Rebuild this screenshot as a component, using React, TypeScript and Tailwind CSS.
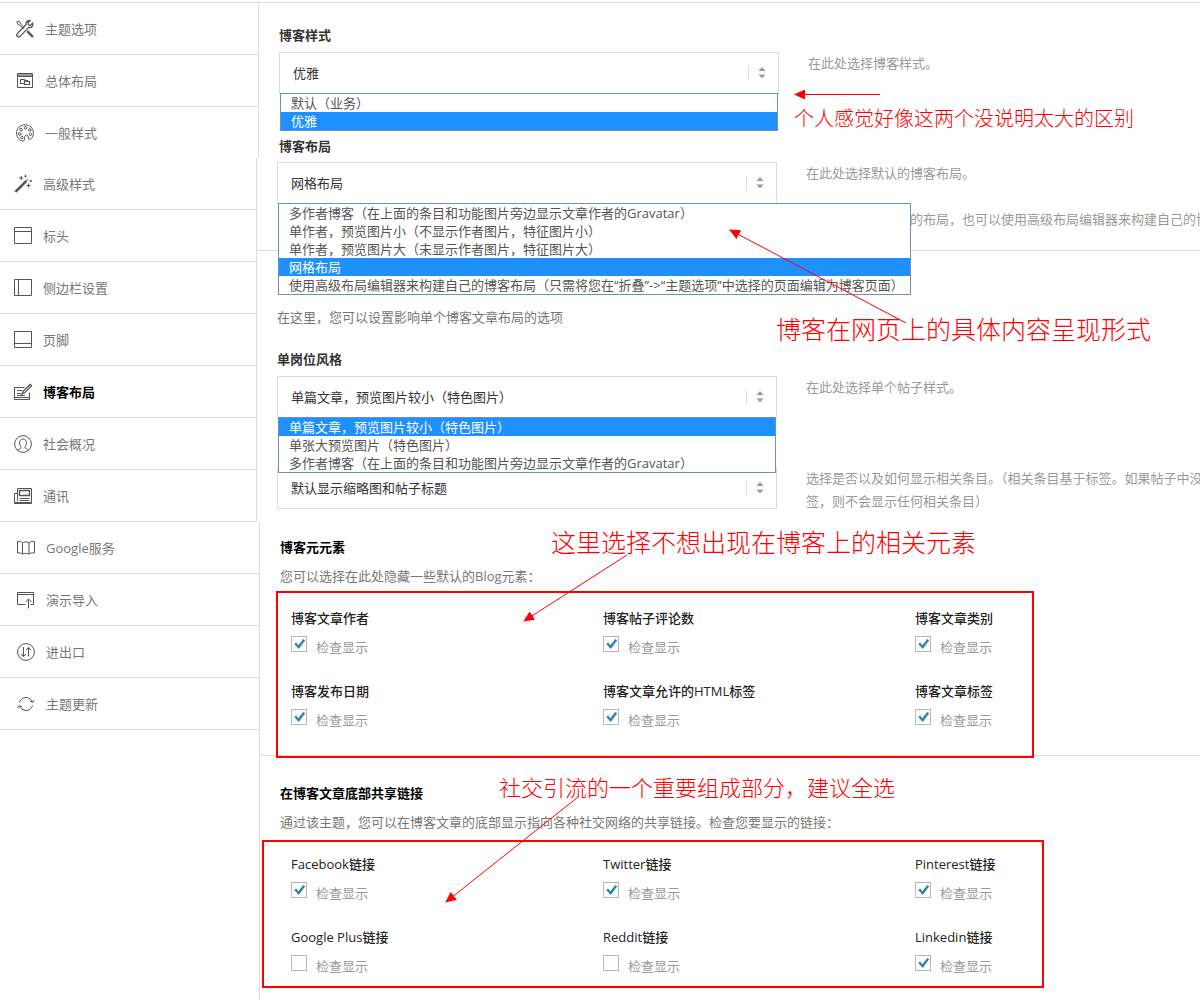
import { useId, type ReactNode } from "react";
import clsx from "clsx";

type Item = { label: string; icon: ReactNode; active?: boolean };

const icons = {
  tools: (
    <>
      <path d="M2.5 2.2 5 3.2 6 5.6 9.4 9M2.5 2.2 1.8 3 3 5.6 5.2 6.6 8.6 10" />
      <path d="M12.2 12.2 18 18" strokeWidth="2.4" />
      <path
        d="M17.6 4.2 15.4 6.2 13.4 5.8 13 3.8 15 1.6C12.6 1 10.4 3 11 5.8L2.2 14.6C.6 16.2 3 19.2 5 17.4L13.8 8.4C16.6 9 18.8 6.8 17.6 4.2Z"
        strokeWidth="1.3"
      />
      <path d="M3.6 16h.6" />
    </>
  ),
  windows: (
    <>
      <path d="M2.5 2.5h15v14h-15zM2.5 5.5h15" />
      <path d="M3 4h14" stroke="#999" strokeWidth="2" />
      <path d="M5.5 8.5h4v4h-4zM9.5 10.5h1.500v-1h1.500v1h2v3h-5z" strokeWidth="1.2" />
    </>
  ),
  palette: (
    <>
      <path d="M10 1.8C5 1.8 1.6 5.4 1.6 10c0 4.4 2.8 7.8 6.2 8 2.6 0 1.4-3 2-4.6.6-1.8 2.6-1.8 3.2-.4.6 1.2-.2 3.4 1.4 3.4 2.2-.2 4-3 4-6.6 0-4.8-3.6-8-8.4-8Z" />
      <circle cx="6" cy="6.5" r="1.3" />
      <circle cx="10.6" cy="4.8" r="1.3" />
      <circle cx="14.8" cy="7" r="1.3" />
      <circle cx="4.8" cy="11" r="1.3" />
      <circle cx="6.8" cy="14.6" r="1.3" />
      <circle cx="15.4" cy="11.4" r="1.2" />
    </>
  ),
  wand: (
    <>
      <path d="M2.4 17.8 13.4 6.8" strokeWidth="2.6" />
      <path d="m12 8.2 3-3" strokeWidth="1" />
      <path d="M8.2 2v4M6.2 4h4M12.5 1v2.4M11.3 2.2h2.4M15.5 9.5v4M13.5 11.5h4M17.8 5.8v2.4M16.6 7H19" />
    </>
  ),
  header: <path d="M1.5 1.5h17v16h-17zM1.5 5.5h17" />,
  sidebar: <path d="M1.5 1.5h17v16h-17zM5.5 1.5v16" />,
  footer: <path d="M1.5 1.5h17v16h-17zM1.5 13.5h17" />,
  edit: (
    <>
      <path d="M11.5 5.5h-10v12h15v-7M1.5 15.5h15M4 8.5h5M4 11.5h4M4 13.5h8" />
      <path d="m9 12 1-2.6 7-7 1.6 1.4-7 7z" strokeWidth="1.3" />
      <path d="m15.2 4.2 1.6 1.6" />
    </>
  ),
  person: (
    <>
      <circle cx="10" cy="10" r="8.4" />
      <path d="M4.6 16.4c.4-1.4 3.6-1.4 3.6-3.2-1-1-1.6-2.4-1.6-4.2 0-2.6 1.4-4 3.4-4s3.4 1.4 3.4 4c0 1.8-.6 3.2-1.6 4.2 0 1.8 3.2 1.8 3.6 3.2" />
    </>
  ),
  news: (
    <>
      <path d="M4.5 2.5h14v15h-17v-10h3zM4.5 6.5v8.5" />
      <path d="M6.5 4.5h10v5h-10z" strokeWidth="1.4" />
      <path d="M6.5 12.5h10M6.5 14.5h10M1.5 16.5h17" />
    </>
  ),
  map: (
    <path d="M1.5 3.5c2-.4 4 0 5 1.5 1-1.5 5-1.5 6.5 0 1-1.5 3-1.9 5.500-1.500v11.500c-2.500-.4-4.500 0-5.500 1.200-1.500-1.200-5.500-1.200-6.500 0-1-1.200-3-1.600-5-1.200zM6.500 5v11.200M13 5v11.200" />
  ),
  upload: (
    <>
      <path d="M9.5 14.5h-8v-12h16v12h-3" />
      <path d="M1.5 4.5h16" />
      <path d="M12.5 18.500V9M9.5 12l3-3 3 3" />
    </>
  ),
  swap: (
    <>
      <circle cx="10" cy="10" r="8.4" />
      <path d="M7.5 5v9.500M5 12l2.500 2.500L10 12M12.500 14.500V5.500M10 8l2.500-2.500L15 8" />
    </>
  ),
  refresh: (
    <>
      <path d="M3.5 8.5C4.5 5 7 3.5 10 3.5s5.5 2 6.4 4.5M16.5 11.5c-1 3.5-3.5 5-6.5 5s-5.500-2-6.400-4.500" />
      <path d="m13.8 7 2.8 1.4L18.4 6M6.2 13l-2.800-1.400L1.6 14" />
    </>
  ),
};

const topItems: Item[] = [
  { label: "主题选项", icon: icons.tools },
  { label: "总体布局", icon: icons.windows },
  { label: "一般样式", icon: icons.palette },
];

const middleItems: Item[] = [
  { label: "高级样式", icon: icons.wand },
  { label: "标头", icon: icons.header },
  { label: "侧边栏设置", icon: icons.sidebar },
  { label: "页脚", icon: icons.footer },
  { label: "博客布局", icon: icons.edit, active: true },
  { label: "社会概况", icon: icons.person },
  { label: "通讯", icon: icons.news },
];

const bottomItems: Item[] = [
  { label: "Google服务", icon: icons.map },
  { label: "演示导入", icon: icons.upload },
  { label: "进出口", icon: icons.swap },
  { label: "主题更新", icon: icons.refresh },
];

const blogStyles = ["默认（业务）", "优雅"];

const blogLayouts = [
  "多作者博客（在上面的条目和功能图片旁边显示文章作者的Gravatar）",
  "单作者，预览图片小（不显示作者图片，特征图片小）",
  "单作者，预览图片大（未显示作者图片，特征图片大）",
  "网格布局",
  "使用高级布局编辑器来构建自己的博客布局（只需将您在“折叠”->“主题选项”中选择的页面编辑为博客页面）",
];

const postStyles = [
  "单篇文章，预览图片较小（特色图片）",
  "单张大预览图片（特色图片）",
  "多作者博客（在上面的条目和功能图片旁边显示文章作者的Gravatar）",
];

const metaElements = [
  { label: "博客文章作者", checked: true },
  { label: "博客帖子评论数", checked: true },
  { label: "博客文章类别", checked: true },
  { label: "博客发布日期", checked: true },
  { label: "博客文章允许的HTML标签", checked: true },
  { label: "博客文章标签", checked: true },
];

const shareLinks = [
  { label: "Facebook链接", checked: true },
  { label: "Twitter链接", checked: true },
  { label: "Pinterest链接", checked: true },
  { label: "Google Plus链接", checked: false },
  { label: "Reddit链接", checked: false },
  { label: "Linkedin链接", checked: true },
];

function NavItems({ items, className }: { items: Item[]; className: string }) {
  return (
    <nav className={clsx("shrink-0 border-r border-[#dcdcdc]", className)}>
      {items.map(({ label, icon, active }) => (
        <a
          key={label}
          href="#"
          className={clsx(
            "flex h-[52px] items-center gap-[10px] border-b border-[#dcdcdc]",
            active ? "font-bold text-black" : "text-[#777]"
          )}
        >
          <svg width="20" height="20" viewBox="0 0 20 20" fill="none" stroke="#555" strokeWidth="1">
            {icon}
          </svg>
          {label}
        </a>
      ))}
    </nav>
  );
}

function SelectBox({ label, value, options, id }: { label?: string; value: string; options: string[]; id?: string }) {
  return (
    <div className="relative">
      <select
        id={id}
        aria-label={label}
        defaultValue={value}
        className="block h-[42px] w-full appearance-none border border-[#ddd] bg-white pr-10 pl-[13px] text-[#333]"
      >
        {options.map((o) => (
          <option key={o}>{o}</option>
        ))}
      </select>
      <svg
        className="pointer-events-none absolute top-[14px] right-[12px]"
        width="20"
        height="14"
        viewBox="0 0 20 14"
      >
        <path d="M1.5 0v14" stroke="#ddd" />
        <path d="m11.500 5 3.500-4 3.500 4zM11.500 8.500l3.500 4 3.500-4z" fill="#999" />
      </svg>
    </div>
  );
}

function OpenList({ options, value, className }: { options: string[]; value: string; className: string }) {
  return (
    <ul
      role="listbox"
      className={clsx("absolute top-[41px] left-px z-10 border border-[#6f8fb5] bg-white", className)}
    >
      {options.map((o) => (
        <li
          key={o}
          role="option"
          aria-selected={o === value}
          className={clsx(
            "h-[18px] pl-[10px] leading-[18px] whitespace-nowrap",
            o === value ? "bg-[#1e90ff] text-white" : "text-[#555]"
          )}
        >
          {o}
        </li>
      ))}
    </ul>
  );
}

function CheckItem({ label, checked }: { label: string; checked: boolean }) {
  const id = useId();
  return (
    <div>
      <h4 className="font-medium text-[#222]">{label}</h4>
      <div className="mt-2 flex items-start gap-[9px]">
        <span className="relative size-4">
          <input
            id={id}
            type="checkbox"
            defaultChecked={checked}
            className="peer block size-4 appearance-none border border-[#b4b9be] bg-white"
          />
          <svg
            className="pointer-events-none absolute inset-0 hidden peer-checked:block"
            width="16"
            height="16"
            viewBox="0 0 16 16"
          >
            <path d="m3.200 8 2-1.400 2.100 2.600L12.300 3l1.900 1.200L7.800 13z" fill="#2a84ad" />
          </svg>
        </span>
        <label htmlFor={id} className="pt-px text-[#999]">
          检查显示
        </label>
      </div>
    </div>
  );
}

function CheckGrid({ items, boxClass }: { items: { label: string; checked: boolean }[]; boxClass: string }) {
  return (
    <div className="relative grid grid-cols-[312px_312px_1fr] gap-y-6 pt-[22px] pl-[11px]">
      {items.map((item) => (
        <CheckItem key={item.label} {...item} />
      ))}
      <div className={clsx("pointer-events-none absolute border-2 border-[#f00]", boxClass)} />
    </div>
  );
}

function Annotations() {
  return (
    <div className="pointer-events-none absolute inset-0 z-20 whitespace-nowrap text-[#f00] font-light">
      <p className="absolute top-[107px] left-[794px] text-[20px] leading-6">个人感觉好像这两个没说明太大的区别</p>
      <p className="absolute top-[313px] left-[776px] text-[25px] leading-8">博客在网页上的具体内容呈现形式</p>
      <p className="absolute top-[526px] left-[551px] text-[25px] leading-8">这里选择不想出现在博客上的相关元素</p>
      <p className="absolute top-[775px] left-[499px] text-[22px] leading-6">社交引流的一个重要组成部分，建议全选</p>
      <svg className="absolute top-0 left-0" width="1200" height="1000" viewBox="0 0 1200 1000">
        <defs>
          <marker
            id="head"
            markerUnits="userSpaceOnUse"
            markerWidth="12"
            markerHeight="10"
            refX="10"
            refY="5"
            orient="auto"
          >
            <path d="M0 0 11 5 0 10z" fill="#f00" />
          </marker>
        </defs>
        <g stroke="#f00" strokeWidth="1">
          <path d="M880 94.5H795" markerEnd="url(#head)" />
          <path d="M906 323 730 230" markerEnd="url(#head)" />
          <path d="M627 555 524 621" markerEnd="url(#head)" />
          <path d="M578 797 446 902" markerEnd="url(#head)" />
        </g>
      </svg>
    </div>
  );
}

const row = "grid grid-cols-[500px_1fr] items-start gap-[29px]";
const hint = "overflow-hidden leading-[23px] whitespace-nowrap text-[#999]";

export default function App() {
  return (
    <div className="relative flex min-h-screen flex-col overflow-x-clip bg-white pt-[2px] font-['Open_Sans','Noto_Sans_CJK_SC',sans-serif] text-[13px] leading-5">
      {/* Blog style */}
      <div className="flex border-t border-[#dcdcdc]">
        <NavItems items={topItems} className="w-[259px] [&>a]:pl-[15px] [&>a:last-child]:h-[51px] [&>a:last-child]:border-0" />
        <div className="min-w-0 flex-1 pt-[22px] pl-5">
          <label htmlFor="blog-style" className="mb-[7px] block font-bold text-[#333]">
            博客样式
          </label>
          <div className={row}>
            <div className="relative">
              <SelectBox id="blog-style" value="优雅" options={blogStyles} />
              <OpenList options={blogStyles} value="优雅" className="w-[498px]" />
            </div>
            <p className={hint}>在此处选择博客样式。</p>
          </div>
          <label htmlFor="blog-layout" className="mt-[42px] block font-bold text-[#333]">
            博客布局
          </label>
        </div>
      </div>

      {/* Blog layout and single post */}
      <div className="flex">
        <NavItems items={middleItems} className="w-[257px] [&>a]:pl-[13px]" />
        <div className="min-w-0 flex-1 pt-1">
          <section className="border-b border-[#dcdcdc] pb-[19px] pl-5">
            <div className={row}>
              <div className="relative">
                <SelectBox id="blog-layout" value="网格布局" options={blogLayouts} />
                <OpenList options={blogLayouts} value="网格布局" className="w-[633px]" />
              </div>
              <div className={hint}>
                <p>在此处选择默认的博客布局。</p>
                <p className="mt-[23px] pl-[104px]">的布局，也可以使用高级布局编辑器来构建自己的博</p>
              </div>
            </div>
          </section>
          <section className="pt-[56px] pl-5">
            <p className="text-[#777]">在这里，您可以设置影响单个博客文章布局的选项</p>
            <label htmlFor="post-style" className="mt-[22px] mb-[7px] block font-bold text-[#333]">
              单岗位风格
            </label>
            <div className={row}>
              <div className="relative">
                <SelectBox id="post-style" value={postStyles[0]} options={postStyles} />
                <OpenList options={postStyles} value={postStyles[0]} className="w-[498px]" />
              </div>
              <p className={hint}>在此处选择单个帖子样式。</p>
            </div>
            <div className={clsx(row, "mt-[49px]")}>
              <SelectBox label="相关条目" value="默认显示缩略图和帖子标题" options={["默认显示缩略图和帖子标题"]} />
              <p className={hint}>
                选择是否以及如何显示相关条目。（相关条目基于标签。如果帖子中没
                <br />
                签，则不会显示任何相关条目）
              </p>
            </div>
          </section>
        </div>
      </div>

      {/* Meta elements and share links */}
      <div className="flex flex-1">
        <NavItems items={bottomItems} className="w-[260px] [&>a]:pl-[16px]" />
        <div className="min-w-0 flex-1">
          <section className="border-b border-[#dcdcdc] pt-[15px] pb-[25px] pl-5">
            <h3 className="font-bold text-black">博客元元素</h3>
            <p className="mt-[9px] text-[#777]">您可以选择在此处隐藏一些默认的Blog元素：</p>
            <CheckGrid items={metaElements} boxClass="top-[5px] -left-1 h-[167px] w-[758px]" />
          </section>
          <section className="pt-[27px] pl-5">
            <h3 className="font-bold text-black">在博客文章底部共享链接</h3>
            <p className="mt-[9px] text-[#777]">
              通过该主题，您可以在博客文章的底部显示指向各种社交网络的共享链接。检查您要显示的链接：
            </p>
            <CheckGrid items={shareLinks} boxClass="top-2 -left-[18px] h-[148px] w-[782px]" />
          </section>
        </div>
      </div>

      <Annotations />
    </div>
  );
}
